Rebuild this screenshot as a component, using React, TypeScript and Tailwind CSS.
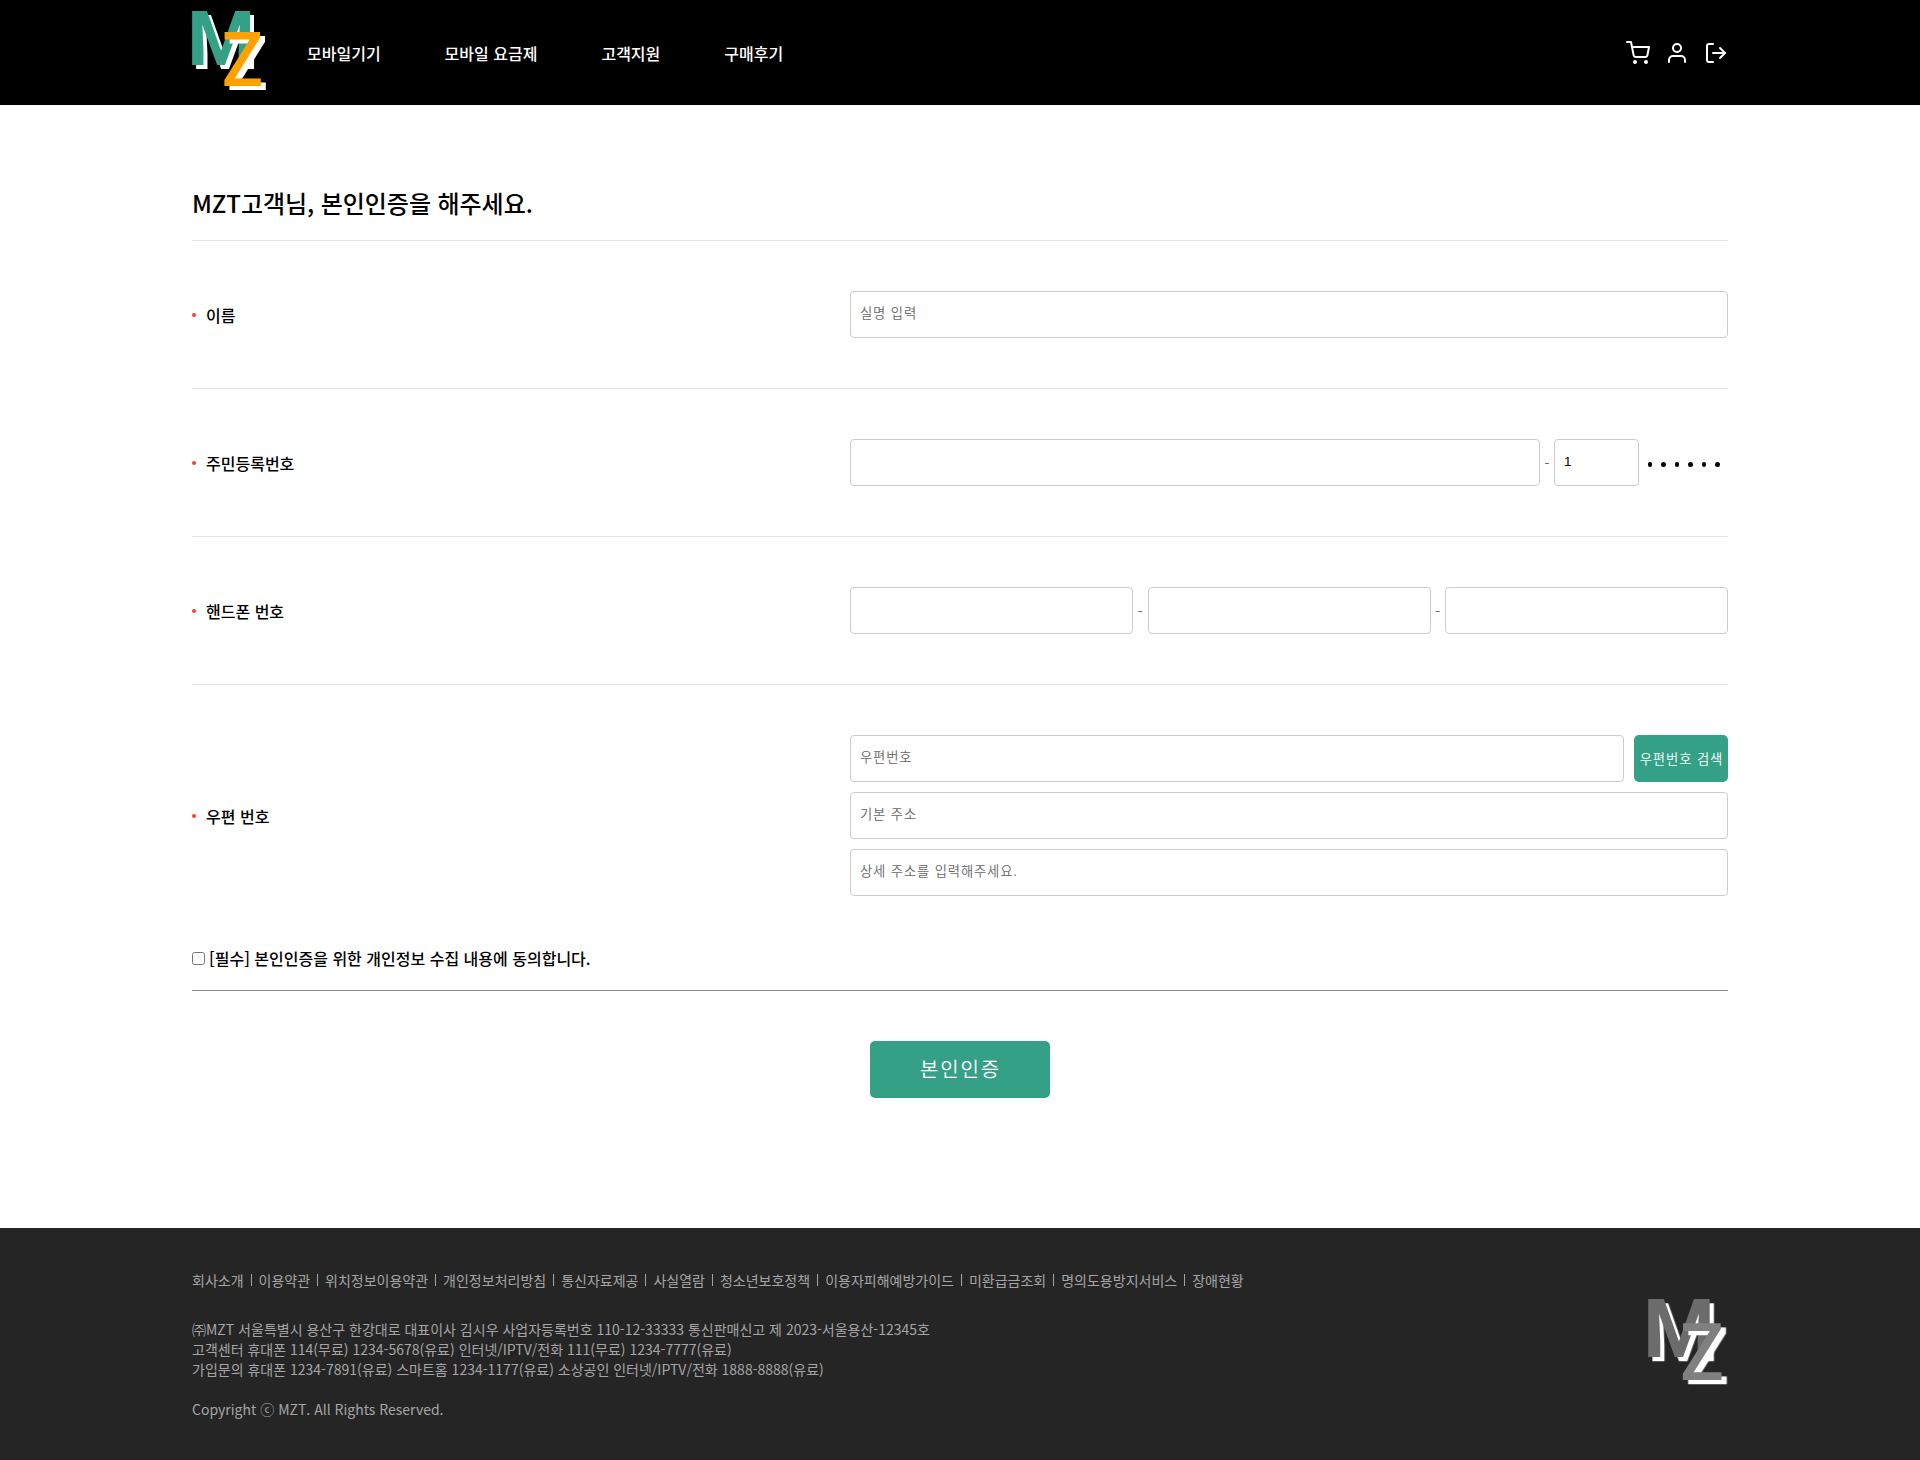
import React from "react";
import { FiLogOut, FiShoppingCart, FiUser } from "react-icons/fi";

const navItems = ["모바일기기", "모바일 요금제", "고객지원", "구매후기"];

const footerLinks = [
  "회사소개",
  "이용약관",
  "위치정보이용약관",
  "개인정보처리방침",
  "통신자료제공",
  "사실열람",
  "청소년보호정책",
  "이용자피해예방가이드",
  "미환급금조회",
  "명의도용방지서비스",
  "장애현황",
];

type LogoProps = { mClass: string; zClass: string; className: string };

function Logo({ mClass, zClass, className }: LogoProps) {
  return (
    <svg viewBox="0 0 75 80" className={`overflow-visible font-['Roboto',sans-serif] ${className}`}>
      <g className="[filter:drop-shadow(4px_4px_0_#fff)]">
        <text transform="translate(-4.83 55) scale(1.011 1)" fontSize="76.52" className={`font-bold ${mClass}`}>M</text>
      </g>
      <g className="[filter:drop-shadow(5px_4px_0_#fff)]">
        <text transform="translate(29.86 76) scale(0.913 1)" fontSize="75.13" className={`font-medium ${zClass}`}>Z</text>
      </g>
    </svg>
  );
}

const fieldClass =
  "h-[47px] min-w-0 rounded-[4px] border border-[#ccc] bg-white px-[9px] pb-[3px] text-[13.333px] font-[350] tracking-[0.85px] text-black outline-none placeholder:text-[#666] font-['Liberation_Sans','Noto_Sans_CJK_KR',sans-serif]";

function Field({ className, ...props }: React.InputHTMLAttributes<HTMLInputElement>) {
  return <input className={`${fieldClass} ${className ?? "w-full"}`} {...props} />;
}

function Row({ label, last, children }: { label: string; last?: boolean; children: React.ReactNode }) {
  return (
    <div className={`flex items-center justify-between py-[50px] ${last ? "" : "border-b border-[#e1e4e8]"}`}>
      <div className="flex items-center gap-[10px]">
        <span className="size-1 rounded-full bg-[#ff3b30]" />
        <span className="text-base leading-6 font-medium">{label}</span>
      </div>
      <div className="w-[878px]">{children}</div>
    </div>
  );
}

function Dash() {
  return <span className="w-[14.5px] shrink-0 text-center text-sm text-[#666]">-</span>;
}

export default function App() {
  return (
    <div className="flex h-[1460px] flex-col bg-white text-black font-['Noto_Sans_CJK_KR',sans-serif]" lang="ko">
      <header className="h-[105px] bg-black">
        <div className="mx-auto flex h-full w-[1536px] items-center">
          <Logo mClass="fill-[#34a187]" zClass="fill-[#ffa200]" className="-mt-[5px] h-20 w-[75px]" />
          <nav className="ml-[40px] flex gap-16 text-base font-medium text-white">
            {navItems.map((item) => (
              <a key={item} href="#">{item}</a>
            ))}
          </nav>
          <div className="ml-auto flex gap-[15px] text-2xl text-white">
            <FiShoppingCart />
            <FiUser />
            <FiLogOut />
          </div>
        </div>
      </header>

      <main className="mx-auto w-[1536px] flex-1 pt-20">
        <h1 className="h-14 border-b border-[#e1e4e8] text-2xl leading-9 font-medium tracking-[-0.06px]">
          MZT고객님, 본인인증을 해주세요.
        </h1>

        <Row label="이름">
          <Field placeholder="실명 입력" />
        </Row>
        <Row label="주민등록번호">
          <div className="flex items-center">
            <Field className="w-[690px]" />
            <span className="w-[14px] shrink-0 text-center text-sm text-[#666]">-</span>
            <Field className="w-[85px]" defaultValue="1" />
            <div className="mt-[4px] ml-[9px] flex gap-[9.2px]">
              {[0, 1, 2, 3, 4, 5].map((n) => (
                <span key={n} className="size-[4.3px] rounded-full bg-black" />
              ))}
            </div>
          </div>
        </Row>
        <Row label="핸드폰 번호">
          <div className="flex items-center">
            <Field className="flex-1" />
            <Dash />
            <Field className="flex-1" />
            <Dash />
            <Field className="flex-1" />
          </div>
        </Row>
        <Row label="우편 번호" last>
          <div className="flex flex-col gap-[10px]">
            <div className="flex gap-[10px]">
              <Field className="flex-1" placeholder="우편번호" />
              <button className="h-[47px] w-[94px] rounded-[5px] bg-[#34a187] pt-[2px] pl-px text-[13.333px] font-[350] tracking-[0.9px] whitespace-nowrap text-white font-['Liberation_Sans','Noto_Sans_CJK_KR',sans-serif]">
                우편번호 검색
              </button>
            </div>
            <Field placeholder="기본 주소" />
            <Field placeholder="상세 주소를 입력해주세요." />
          </div>
        </Row>

        <label className="flex h-[45px] items-start border-b border-[#888] text-base leading-6 font-medium">
          <input type="checkbox" className="mt-[6px] mr-[4px] size-[13px]" />
          [필수] 본인인증을 위한 개인정보 수집 내용에 동의합니다.
        </label>

        <div className="mt-[50px] flex justify-center">
          <button className="h-[57px] w-[180px] rounded-[5px] bg-[#34a187] pl-px text-xl font-[350] tracking-[1.8px] text-white font-['Liberation_Sans','Noto_Sans_CJK_KR',sans-serif]">
            본인인증
          </button>
        </div>
      </main>

      <footer className="h-[232px] bg-[#252525] text-sm leading-5 text-[#a5a5a5]">
        <div className="mx-auto flex h-full w-[1536px] items-center justify-between">
          <div>
            <ul className="flex items-center">
              {footerLinks.map((link, i) => (
                <li key={link} className="flex items-center">
                  {i > 0 && <span className="mx-[7px] h-3 w-px bg-[#a5a5a5]" />}
                  {link}
                </li>
              ))}
            </ul>
            <p className="mt-[29px]">㈜MZT 서울특별시 용산구 한강대로 대표이사 김시우 사업자등록번호 110-12-33333 통신판매신고 제 2023-서울용산-12345호</p>
            <p>고객센터 휴대폰 114(무료) 1234-5678(유료) 인터넷/IPTV/전화 111(무료) 1234-7777(유료)</p>
            <p>가입문의 휴대폰 1234-7891(유료) 스마트홈 1234-1177(유료) 소상공인 인터넷/IPTV/전화 1888-8888(유료)</p>
            <p className="mt-5">Copyright ⓒ MZT. All Rights Reserved.</p>
          </div>
          <Logo mClass="fill-[#6c6c6c]" zClass="fill-[#808080]" className="-mt-[5px] h-[85px] w-20" />
        </div>
      </footer>
    </div>
  );
}
